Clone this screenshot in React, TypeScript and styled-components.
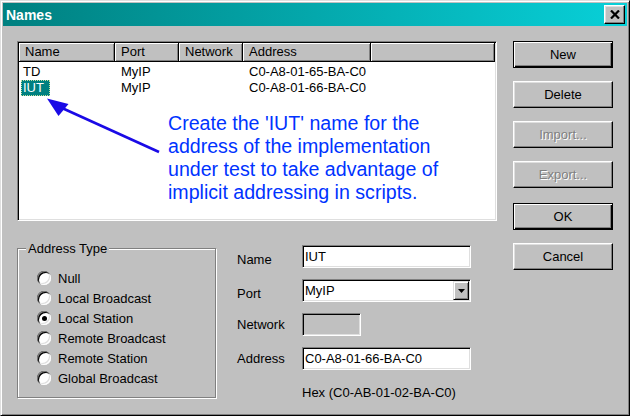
import React from "react";
import styled, { createGlobalStyle } from "styled-components";

const UI = `"Liberation Sans", Arial, sans-serif`;
const COLUMNS = "96px 64px 64px 128px 1fr";

const GlobalStyle = createGlobalStyle`
  html, body { margin: 0; padding: 0; background: #c0c0c0; }
  body { font-family: ${UI}; font-size: 13px; color: #000; }
`;

const Window = styled.div`
  box-sizing: border-box;
  width: 630px;
  height: 416px;
  display: flex;
  flex-direction: column;
  background: #c0c0c0;
  border: 1px solid;
  border-color: #dfdfdf #000 #000 #dfdfdf;
  box-shadow: inset 1px 1px 0 #fff, inset -1px -1px 0 #808080;
  padding: 2px;
  font-family: ${UI};
  font-size: 13px;
  color: #000;
`;

const TitleBar = styled.div`
  flex: none;
  height: 23px;
  display: flex;
  align-items: center;
  justify-content: space-between;
  padding: 0 2px 0 3px;
  background: linear-gradient(to right, #008080, #08d0d8);
`;

const Title = styled.span`
  color: #fff;
  font-weight: bold;
  font-size: 14px;
  line-height: 16px;
`;

const CloseButton = styled.button`
  box-sizing: border-box;
  width: 21px;
  height: 19px;
  margin: 0;
  padding: 0;
  display: flex;
  align-items: center;
  justify-content: center;
  background: #c0c0c0;
  border: 1px solid;
  border-color: #fff #000 #000 #fff;
  box-shadow: inset -1px -1px 0 #808080, inset 1px 1px 0 #dfdfdf;
`;

const Body = styled.div`
  flex: 1;
  display: flex;
  gap: 16px;
  padding: 15px 14px 0 14px;
`;

const MainColumn = styled.div`
  width: 480px;
  display: flex;
  flex-direction: column;
`;

const ButtonColumn = styled.div`
  width: 100px;
  display: flex;
  flex-direction: column;
  gap: 13px;
`;

const DialogButton = styled.button<{ $default?: boolean; $extraGap?: number }>`
  box-sizing: border-box;
  width: 100%;
  height: 27px;
  margin: ${(p) => p.$extraGap ?? 0}px 0 0;
  padding: 0;
  font-family: ${UI};
  font-size: 13px;
  color: #000;
  background: #c0c0c0;
  border: 1px solid;
  border-color: ${(p) => (p.$default ? "#000" : "#fff #000 #000 #fff")};
  box-shadow: ${(p) =>
    p.$default
      ? "inset 1px 1px 0 #fff, inset -1px -1px 0 #000, inset -2px -2px 0 #808080"
      : "inset -1px -1px 0 #808080, inset 1px 1px 0 #dfdfdf"};
  &:disabled {
    color: #808080;
    text-shadow: 1px 1px 0 #fff;
  }
`;

const ListBox = styled.div`
  position: relative;
  box-sizing: border-box;
  height: 180px;
  padding: 1px;
  background: #fff;
  border: 1px solid;
  border-color: #808080 #fff #fff #808080;
  box-shadow: inset 1px 1px 0 #000, inset -1px -1px 0 #dfdfdf;
  overflow: hidden;
`;

const HeaderRow = styled.div`
  display: grid;
  grid-template-columns: ${COLUMNS};
  height: 19px;
`;

const HeaderCell = styled.div`
  box-sizing: border-box;
  height: 19px;
  padding-left: 6px;
  line-height: 18px;
  background: #c0c0c0;
  border-right: 1px solid #000;
  border-bottom: 1px solid #000;
  box-shadow: inset 1px 1px 0 #fff, inset -1px -1px 0 #808080;
  white-space: nowrap;
`;

const ListBody = styled.div`
  padding-top: 2px;
`;

const Row = styled.div`
  display: grid;
  grid-template-columns: ${COLUMNS};
  height: 16px;
`;

const Cell = styled.div<{ $first?: boolean }>`
  padding-left: ${(p) => (p.$first ? 2 : 6)}px;
  line-height: 16px;
  white-space: nowrap;
`;

const ItemLabel = styled.span<{ $selected?: boolean }>`
  display: inline-block;
  box-sizing: border-box;
  height: 16px;
  padding: 0 5px 0 1px;
  line-height: 14px;
  border: 1px dotted ${(p) => (p.$selected ? "#c8e0a0" : "transparent")};
  background: ${(p) => (p.$selected ? "#008080" : "transparent")};
  color: ${(p) => (p.$selected ? "#fff" : "#000")};
`;

const Annotation = styled.p`
  position: absolute;
  left: 150px;
  top: 70px;
  margin: 0;
  font-family: ${UI};
  font-size: 19.6px;
  line-height: 23px;
  color: #0033ff;
  white-space: nowrap;
`;

const ArrowLayer = styled.svg`
  position: absolute;
  left: 0;
  top: 0;
  pointer-events: none;
`;

const BottomRow = styled.div`
  display: flex;
  align-items: flex-start;
  margin-top: 20px;
`;

const GroupBox = styled.fieldset`
  box-sizing: border-box;
  width: 199px;
  min-width: 0;
  margin: 0;
  padding: 0;
  border: 1px solid #808080;
  box-shadow: 1px 1px 0 #fff, inset 1px 1px 0 #fff;
`;

const GroupLegend = styled.legend`
  margin-left: 8px;
  padding: 0 2px;
  line-height: 15px;
  background: #c0c0c0;
`;

const RadioList = styled.div`
  display: flex;
  flex-direction: column;
  padding: 12px 0 9px 19px;
`;

const RadioRow = styled.label`
  display: flex;
  align-items: center;
  gap: 7px;
  height: 20px;
  line-height: 15px;
`;

const RadioCircle = styled.span<{ $checked?: boolean }>`
  box-sizing: border-box;
  flex: none;
  width: 14px;
  height: 14px;
  border-radius: 50%;
  background: #fff;
  display: flex;
  align-items: center;
  justify-content: center;
  box-shadow: inset 1px 1px 0 #808080, inset 2px 2px 0 #000,
    inset -1px -1px 0 #fff, inset -2px -2px 0 #dfdfdf;
  &::after {
    content: "";
    width: 5px;
    height: 5px;
    border-radius: 50%;
    background: ${(p) => (p.$checked ? "#000" : "transparent")};
  }
`;

const Form = styled.div`
  display: grid;
  grid-template-columns: 65px 169px;
  row-gap: 11px;
  align-items: center;
  margin: 4px 0 0 21px;
`;

const FieldLabel = styled.span<{ $drop?: boolean }>`
  line-height: 15px;
  padding-top: ${(p) => (p.$drop ? 6 : 0)}px;
`;

const TextField = styled.input<{ $width?: number }>`
  box-sizing: border-box;
  width: ${(p) => p.$width ?? 169}px;
  height: 23px;
  margin: 0;
  padding: 0 0 0 2px;
  font-family: ${UI};
  font-size: 13px;
  color: #000;
  background: #fff;
  border: 1px solid;
  border-color: #808080 #fff #fff #808080;
  box-shadow: inset 1px 1px 0 #000, inset -1px -1px 0 #dfdfdf;
  outline: none;
  &:disabled {
    background: #c0c0c0;
  }
`;

const Select = styled.div`
  box-sizing: border-box;
  display: flex;
  width: 169px;
  height: 23px;
  padding: 1px;
  background: #fff;
  border: 1px solid;
  border-color: #808080 #fff #fff #808080;
  box-shadow: inset 1px 1px 0 #000, inset -1px -1px 0 #dfdfdf;
`;

const SelectValue = styled.span`
  flex: 1;
  padding-left: 1px;
  line-height: 19px;
`;

const DropButton = styled.span`
  box-sizing: border-box;
  width: 16px;
  height: 19px;
  display: flex;
  align-items: center;
  justify-content: center;
  background: #c0c0c0;
  border: 1px solid;
  border-color: #dfdfdf #000 #000 #dfdfdf;
  box-shadow: inset 1px 1px 0 #fff, inset -1px -1px 0 #808080;
`;

const HexNote = styled.span`
  grid-column: 2;
  margin-top: 4px;
  line-height: 15px;
`;

type Entry = { name: string; port: string; network: string; address: string; selected?: boolean };

const entries: Entry[] = [
  { name: "TD", port: "MyIP", network: "", address: "C0-A8-01-65-BA-C0" },
  { name: "IUT", port: "MyIP", network: "", address: "C0-A8-01-66-BA-C0", selected: true },
];

const addressTypes = [
  "Null",
  "Local Broadcast",
  "Local Station",
  "Remote Broadcast",
  "Remote Station",
  "Global Broadcast",
];

export default function App() {
  return (
    <>
      <GlobalStyle />
      <Window>
        <TitleBar>
          <Title>Names</Title>
          <CloseButton aria-label="Close">
            <svg width="10" height="9" viewBox="0 0 10 9">
              <path d="M1 0.5 L9 8.5 M9 0.5 L1 8.5" stroke="#000" strokeWidth="2.2" fill="none" />
            </svg>
          </CloseButton>
        </TitleBar>
        <Body>
          <MainColumn>
            <ListBox>
              <HeaderRow>
                <HeaderCell>Name</HeaderCell>
                <HeaderCell>Port</HeaderCell>
                <HeaderCell>Network</HeaderCell>
                <HeaderCell>Address</HeaderCell>
                <HeaderCell />
              </HeaderRow>
              <ListBody>
                {entries.map((e) => (
                  <Row key={e.name}>
                    <Cell $first>
                      <ItemLabel $selected={e.selected}>{e.name}</ItemLabel>
                    </Cell>
                    <Cell>{e.port}</Cell>
                    <Cell>{e.network}</Cell>
                    <Cell>{e.address}</Cell>
                    <Cell />
                  </Row>
                ))}
              </ListBody>
              <ArrowLayer width="478" height="178" viewBox="0 0 478 178">
                <line x1="141" y1="110" x2="44" y2="66" stroke="#1a0ae6" strokeWidth="2.6" />
                <polygon points="29,56.5 50.5,62 40.5,74" fill="#1a0ae6" />
              </ArrowLayer>
              <Annotation>
                Create the 'IUT' name for the
                <br />
                address of the implementation
                <br />
                under test to take advantage of
                <br />
                implicit addressing in scripts.
              </Annotation>
            </ListBox>
            <BottomRow>
              <GroupBox>
                <GroupLegend>Address Type</GroupLegend>
                <RadioList>
                  {addressTypes.map((t) => (
                    <RadioRow key={t}>
                      <RadioCircle $checked={t === "Local Station"} />
                      {t}
                    </RadioRow>
                  ))}
                </RadioList>
              </GroupBox>
              <Form>
                <FieldLabel $drop>Name</FieldLabel>
                <TextField readOnly defaultValue="IUT" />
                <FieldLabel $drop>Port</FieldLabel>
                <Select>
                  <SelectValue>MyIP</SelectValue>
                  <DropButton>
                    <svg width="7" height="4" viewBox="0 0 7 4">
                      <polygon points="0,0 7,0 3.5,4" fill="#000" />
                    </svg>
                  </DropButton>
                </Select>
                <FieldLabel>Network</FieldLabel>
                <TextField $width={59} disabled defaultValue="" />
                <FieldLabel>Address</FieldLabel>
                <TextField readOnly defaultValue="C0-A8-01-66-BA-C0" />
                <HexNote>Hex (C0-AB-01-02-BA-C0)</HexNote>
              </Form>
            </BottomRow>
          </MainColumn>
          <ButtonColumn>
            <DialogButton $default>New</DialogButton>
            <DialogButton>Delete</DialogButton>
            <DialogButton disabled>Import...</DialogButton>
            <DialogButton disabled>Export...</DialogButton>
            <DialogButton $default $extraGap={2}>OK</DialogButton>
            <DialogButton>Cancel</DialogButton>
          </ButtonColumn>
        </Body>
      </Window>
    </>
  );
}
